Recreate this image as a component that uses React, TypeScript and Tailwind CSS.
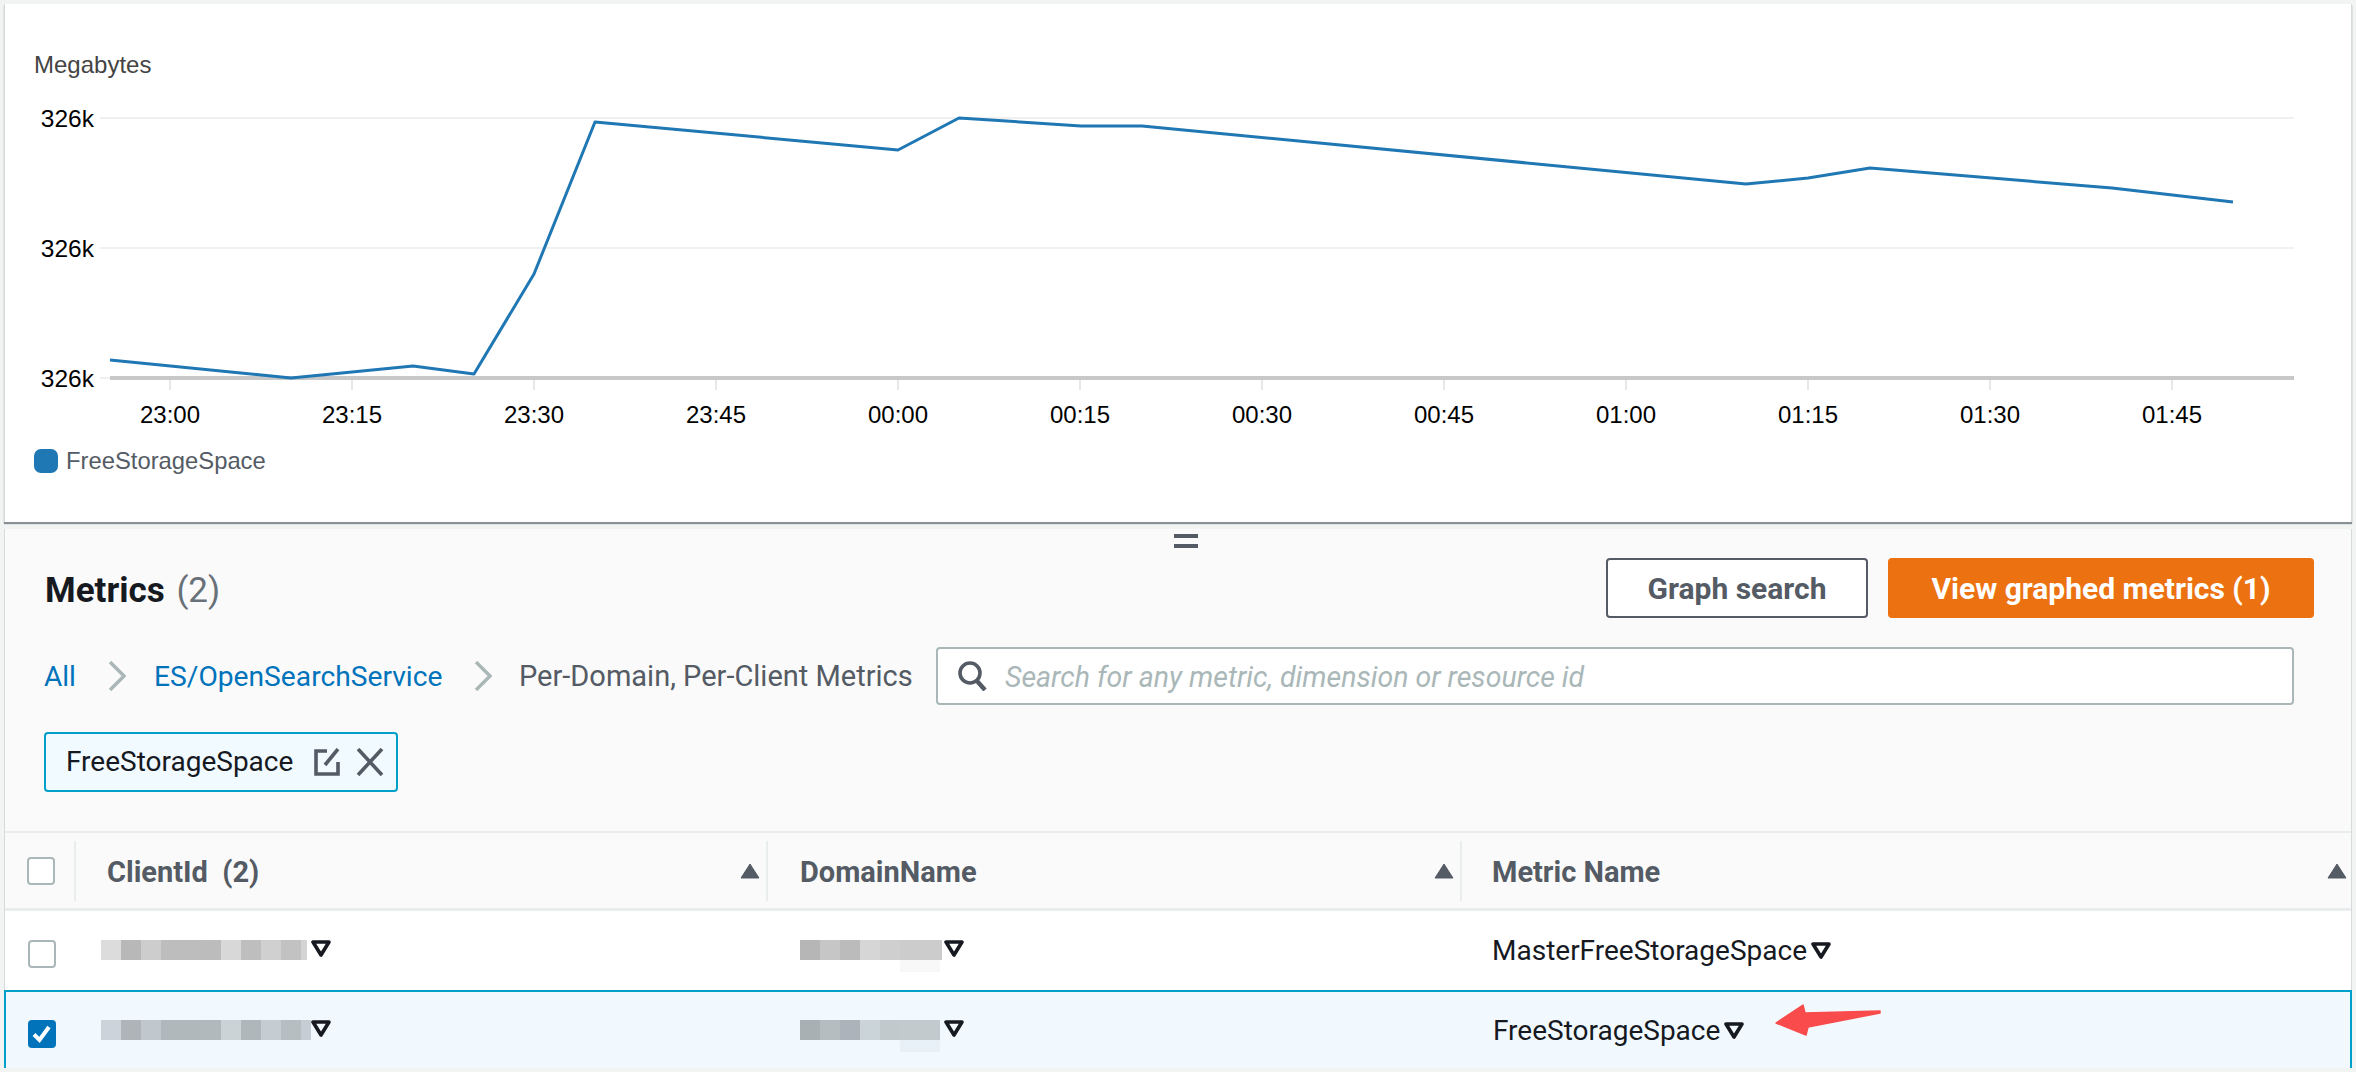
const linePoints = "110,360 291,378 413,366 474,374 534,274 595,122 898,150 959,118 1081,126 1142,126 1746,184 1808,178 1870,168 2112,188 2233,202";

const xTicks = [
  { x: 170, label: "23:00" },
  { x: 352, label: "23:15" },
  { x: 534, label: "23:30" },
  { x: 716, label: "23:45" },
  { x: 898, label: "00:00" },
  { x: 1080, label: "00:15" },
  { x: 1262, label: "00:30" },
  { x: 1444, label: "00:45" },
  { x: 1626, label: "01:00" },
  { x: 1808, label: "01:15" },
  { x: 1990, label: "01:30" },
  { x: 2172, label: "01:45" },
];

const yTicks = [118, 248, 378];

const clientRow1 = [
  "w-[20px] bg-[#dcdcdc]",
  "w-[20px] bg-[#b8b8b8]",
  "w-[20px] bg-[#cdcdcd]",
  "w-[40px] bg-[#bdbdbd]",
  "w-[20px] bg-[#bcbcbc]",
  "w-[20px] bg-[#d8d8d8]",
  "w-[20px] bg-[#bebebe]",
  "w-[20px] bg-[#d0d0d0]",
  "w-[20px] bg-[#c2c2c2]",
  "w-[6px] bg-[#d4d4d4]",
];

const clientRow2 = [
  "w-[20px] bg-[#ccd3da]",
  "w-[20px] bg-[#aeb4b7]",
  "w-[20px] bg-[#c0c8ce]",
  "w-[40px] bg-[#b1b8bb]",
  "w-[20px] bg-[#b2b9bc]",
  "w-[20px] bg-[#cbd3d7]",
  "w-[20px] bg-[#b0b7ba]",
  "w-[20px] bg-[#c5cdd2]",
  "w-[20px] bg-[#b7bec1]",
  "w-[10px] bg-[#c6cdd5]",
];

const domainRow1 = [
  "w-[20px] bg-[#b6b6b6]",
  "w-[20px] bg-[#c6c6c6]",
  "w-[20px] bg-[#bbbbbb]",
  "w-[20px] bg-[#d6d6d6]",
  "w-[20px] bg-[#cfcfcf]",
  "w-[42px] bg-[#cccccc]",
];

const domainRow2 = [
  "w-[20px] bg-[#a9b0b3]",
  "w-[20px] bg-[#b6bdc0]",
  "w-[20px] bg-[#adb3ba]",
  "w-[20px] bg-[#cbd4d9]",
  "w-[20px] bg-[#c1c9cd]",
  "w-[40px] bg-[#c2cacd]",
];

function Chart() {
  return (
    <svg width="2347" height="336" viewBox="5 100 2347 336" className="mt-[19px] block">
      {yTicks.map((y) => (
        <g key={y}>
          <line x1="100" x2="2294" y1={y} y2={y} stroke="#f0f0f0" strokeWidth="2" />
          <text x="94" y={y + 9} textAnchor="end" fontSize="24.5" fill="#000000" fontFamily="'Liberation Sans', sans-serif">
            326k
          </text>
        </g>
      ))}
      <line x1="110" x2="2294" y1="378" y2="378" stroke="#c8c8c8" strokeWidth="4" />
      {xTicks.map((t) => (
        <g key={t.label}>
          <line x1={t.x} x2={t.x} y1="380" y2="390" stroke="#e8e8e8" strokeWidth="2" />
          <text x={t.x} y="423" textAnchor="middle" fontSize="24" fill="#000000" fontFamily="'Liberation Sans', sans-serif">
            {t.label}
          </text>
        </g>
      ))}
      <polyline points={linePoints} fill="none" stroke="#1f77b4" strokeWidth="3" strokeLinejoin="round" />
    </svg>
  );
}

function SortUp() {
  return (
    <svg width="20" height="16" viewBox="0 0 20 16" className="shrink-0">
      <path d="M10 1 L19 15 H1 Z" fill="#545b64" stroke="#545b64" strokeWidth="1" strokeLinejoin="round" />
    </svg>
  );
}

function FilterCaret() {
  return (
    <svg width="20" height="17" viewBox="0 0 20 17" className="shrink-0">
      <path d="M2 2 H18 L10 15 Z" fill="none" stroke="#16191f" strokeWidth="3.6" strokeLinejoin="round" />
    </svg>
  );
}

function Checkbox({ checked }: { checked?: boolean }) {
  return checked ? (
    <div className="flex h-[28px] w-[28px] items-center justify-center rounded-[4px] bg-[#0073bb]">
      <svg width="22" height="22" viewBox="0 0 22 22">
        <path d="M3 11.5 L8.5 17 L18 4" fill="none" stroke="#ffffff" strokeWidth="4" />
      </svg>
    </div>
  ) : (
    <div className="h-[28px] w-[28px] rounded-[4px] border-2 border-[#aab7b8] bg-white" />
  );
}

function Blur({ blocks, faint, faintClass }: { blocks: string[]; faint?: boolean; faintClass?: string }) {
  return (
    <div className="relative flex h-[20px] shrink-0 blur-[0.5px]">
      {blocks.map((c, i) => (
        <div key={i} className={c} />
      ))}
      {faint && <div className={"absolute left-[100px] top-[20px] h-[12px] w-[40px] " + faintClass} />}
    </div>
  );
}

export default function App() {
  return (
    <div className="h-[1072px] overflow-hidden bg-[#f2f3f3] pt-[4px] font-['Roboto',sans-serif] text-[28px]">
      {/* graph */}
      <section className="mx-[4px] h-[518px] border-x border-x-[#d5dbdb] bg-white pt-[45px] shadow-[0_2px_1px_#879196]">
        <div className="pl-[29px] text-[24px] leading-[32px] text-[#444444] font-['Liberation_Sans',sans-serif]">Megabytes</div>
        <Chart />
        <div className="mt-[12px] flex items-center gap-[8px] pl-[29px]">
          <span className="h-[24px] w-[24px] rounded-[7px] bg-[#1f77b4]" />
          <span className="text-[23.8px] leading-[26px] text-[#545b64] font-['Liberation_Sans',sans-serif]">FreeStorageSpace</span>
        </div>
      </section>

      {/* metrics browser */}
      <section className="mx-[4px] mt-[7px] border-x border-x-[#d5dbdb] bg-[#fafafa] pt-[5px]">
        <div className="ml-[1169px] flex h-[14px] w-[24px] flex-col justify-between">
          <div className="h-[4px] bg-[#545b64]" />
          <div className="h-[4px] bg-[#545b64]" />
        </div>

        <div className="mt-[10px] flex h-[60px] items-center justify-between pl-[40px] pr-[37px]">
          <h2 className="translate-y-[3px] text-[35px] font-bold text-[#16191f]">
            Metrics <span className="ml-[3px] font-normal text-[#687078]">(2)</span>
          </h2>
          <div className="flex gap-[20px]">
            <button className="h-[60px] w-[262px] rounded-[4px] border-2 border-[#545b64] bg-white text-[30px] font-bold text-[#545b64]">Graph search</button>
            <button className="h-[60px] w-[426px] rounded-[4px] bg-[#ec7211] text-[30px] font-bold text-white">View graphed metrics (1)</button>
          </div>
        </div>

        <div className="mt-[29px] flex h-[58px] items-center pl-[39px] pr-[57px]">
          <a className="w-[64px] translate-y-px text-[#0073bb]">All</a>
          <svg width="18" height="30" viewBox="0 0 18 30" className="shrink-0">
            <path d="M2 1 L16 15 L2 29" fill="none" stroke="#aab7b8" strokeWidth="3.4" />
          </svg>
          <a className="ml-[28px] w-[320px] shrink-0 translate-y-px text-[28.2px] text-[#0073bb]">ES/OpenSearchService</a>
          <svg width="18" height="30" viewBox="0 0 18 30" className="shrink-0">
            <path d="M2 1 L16 15 L2 29" fill="none" stroke="#aab7b8" strokeWidth="3.4" />
          </svg>
          <span className="ml-[27px] w-[417px] shrink-0 translate-y-px text-[29px] text-[#545b64]">Per-Domain, Per-Client Metrics</span>
          <div className="flex h-[58px] flex-1 items-center rounded-[4px] border-2 border-[#aab7b8] bg-white pl-[19px]">
            <svg width="30" height="30" viewBox="0 0 30 30" className="shrink-0">
              <circle cx="13" cy="12" r="10" fill="none" stroke="#545b64" strokeWidth="3.6" />
              <path d="M20 20 L28 29" fill="none" stroke="#545b64" strokeWidth="4.4" />
            </svg>
            <span className="ml-[18px] translate-y-[2px] text-[28.5px] italic text-[#aab7b8]">Search for any metric, dimension or resource id</span>
          </div>
        </div>

        <div className="ml-[39px] mt-[27px] flex h-[60px] w-[354px] items-center rounded-[4px] border-2 border-[#00a1c9] bg-[#f1faff] pl-[20px] text-[#16191f]">
          <span className="w-[248px]">FreeStorageSpace</span>
          <svg width="26" height="28" viewBox="0 0 26 28" className="shrink-0">
            <path d="M13 3 H2 V26 H24 V14" fill="none" stroke="#545b64" strokeWidth="3.6" />
            <path d="M11 17 L24 1" fill="none" stroke="#545b64" strokeWidth="3.6" />
          </svg>
          <svg width="28" height="28" viewBox="0 0 28 28" className="ml-[16px] shrink-0">
            <path d="M2 1 L26 27 M26 1 L2 27" fill="none" stroke="#545b64" strokeWidth="3.6" />
          </svg>
        </div>

        <div className="mt-[39px] border-t-2 border-t-[#eaeded]">
          {/* header row */}
          <div className="grid h-[78px] grid-cols-[71px_692px_694px_1fr] items-center border-b-[3px] border-b-[#eaeded] text-[29px]">
            <div className="flex h-[60px] items-center border-r-2 border-r-[#eaeded] pl-[22px]">
              <Checkbox />
            </div>
            <div className="flex h-[60px] items-center justify-between border-r-2 border-r-[#eaeded] pl-[31px] pr-[6px] font-bold text-[#545b64]">
              <span className="translate-y-[2px]">ClientId&nbsp; (2)</span>
              <SortUp />
            </div>
            <div className="flex h-[60px] items-center justify-between border-r-2 border-r-[#eaeded] pl-[32px] pr-[6px] font-bold text-[#545b64]">
              <span className="translate-y-[2px]">DomainName</span>
              <SortUp />
            </div>
            <div className="flex h-[60px] items-center justify-between pl-[30px] pr-[4px] font-bold text-[#545b64]">
              <span className="translate-y-[2px]">Metric Name</span>
              <SortUp />
            </div>
          </div>

          {/* unselected row */}
          <div className="grid h-[79px] grid-cols-[71px_692px_694px_1fr] bg-white text-[#16191f]">
            <div className="pl-[23px] pt-[29px]">
              <Checkbox />
            </div>
            <div className="flex items-start gap-[4px] pl-[25px] pt-[29px]">
              <Blur blocks={clientRow1} />
              <FilterCaret />
            </div>
            <div className="flex items-start gap-[2px] pl-[32px] pt-[29px]">
              <Blur blocks={domainRow1} faint faintClass="bg-[#f8f8f8]" />
              <FilterCaret />
            </div>
            <div className="flex items-center gap-[4px] pl-[30px]">
              <span>MasterFreeStorageSpace</span>
              <FilterCaret />
            </div>
          </div>

          {/* selected row */}
          <div className="relative -mx-px grid h-[78px] grid-cols-[71px_692px_694px_1fr] border-x-2 border-t-2 border-[#00a1c9] bg-[#f1f9ff] text-[#16191f]">
            <div className="pl-[22px] pt-[28px]">
              <Checkbox checked />
            </div>
            <div className="flex items-start pl-[24px] pt-[28px]">
              <Blur blocks={clientRow2} />
              <FilterCaret />
            </div>
            <div className="flex items-start gap-[4px] pl-[31px] pt-[28px]">
              <Blur blocks={domainRow2} faint faintClass="bg-[#e9f1f8]" />
              <FilterCaret />
            </div>
            <div className="flex items-center gap-[4px] pl-[30px]">
              <span className="translate-y-px">FreeStorageSpace</span>
              <FilterCaret />
            </div>
            {/* annotation arrow */}
            <svg width="108" height="34" viewBox="0 0 108 34" className="absolute left-[1769px] top-[11px]">
              <path d="M1 20 L28 2 L30 10 L105 8 L105 10 L33 24 L31 32 Z" fill="#f94b4b" stroke="#f94b4b" strokeWidth="1.5" strokeLinejoin="round" />
            </svg>
          </div>
        </div>
      </section>
    </div>
  );
}
